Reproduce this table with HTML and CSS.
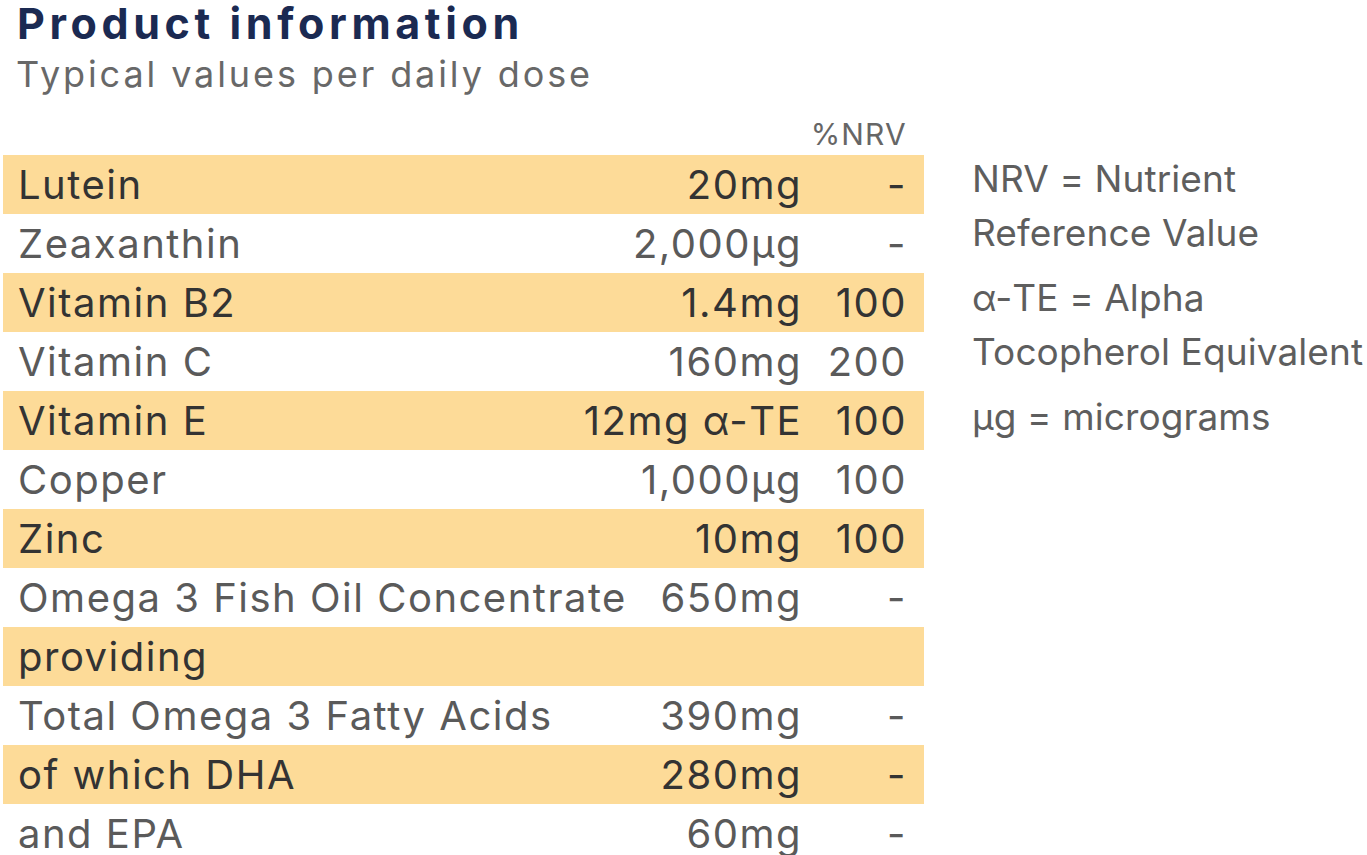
FILE: index.html
```html
<!DOCTYPE html>
<html lang="en">
<head>
<meta charset="utf-8">
<title>Product information</title>
<link rel="stylesheet" href="styles.css">
</head>
<body>
<div class="page">
  <h1 class="title">Product information</h1>
  <p class="subtitle">Typical values per daily dose</p>
  <div class="content">
    <div class="table">
      <div class="head"><span class="h-nrv">%NRV</span></div>
      <div class="row alt"><span class="name">Lutein</span><span class="amt">20mg</span><span class="nrv">-</span></div>
      <div class="row"><span class="name">Zeaxanthin</span><span class="amt">2,000µg</span><span class="nrv">-</span></div>
      <div class="row alt"><span class="name">Vitamin B2</span><span class="amt">1.4mg</span><span class="nrv">100</span></div>
      <div class="row"><span class="name">Vitamin C</span><span class="amt">160mg</span><span class="nrv">200</span></div>
      <div class="row alt"><span class="name">Vitamin E</span><span class="amt">12mg α-TE</span><span class="nrv">100</span></div>
      <div class="row"><span class="name">Copper</span><span class="amt">1,000µg</span><span class="nrv">100</span></div>
      <div class="row alt"><span class="name">Zinc</span><span class="amt">10mg</span><span class="nrv">100</span></div>
      <div class="row"><span class="name">Omega 3 Fish Oil Concentrate</span><span class="amt">650mg</span><span class="nrv">-</span></div>
      <div class="row alt"><span class="name">providing</span><span class="amt"></span><span class="nrv"></span></div>
      <div class="row"><span class="name">Total Omega 3 Fatty Acids</span><span class="amt">390mg</span><span class="nrv">-</span></div>
      <div class="row alt"><span class="name">of which DHA</span><span class="amt">280mg</span><span class="nrv">-</span></div>
      <div class="row"><span class="name">and EPA</span><span class="amt">60mg</span><span class="nrv">-</span></div>
    </div>
    <div class="notes">
      <p>NRV = Nutrient<br>Reference Value</p>
      <p>α-TE = Alpha<br>Tocopherol Equivalent</p>
      <p>µg = micrograms</p>
    </div>
  </div>
</div>
</body>
</html>
```

FILE: styles.css
```css
html, body {
  margin: 0;
  padding: 0;
  background: #ffffff;
}
body {
  font-family: "Inter", "Liberation Sans", sans-serif;
  color: #595959;
}
.title {
  margin: 0;
  padding: 0 0 0 17px;
  font-size: 43px;
  line-height: 46px;
  font-weight: 700;
  color: #1b2a52;
  letter-spacing: 4.6px;
}
.subtitle {
  margin: 4px 0 0 0;
  padding-left: 16px;
  font-size: 36px;
  line-height: 48px;
  font-weight: 400;
  color: #686868;
  letter-spacing: 2.9px;
}
.content {
  display: flex;
  align-items: flex-start;
  gap: 48px;
  margin-top: 14px;
}
.table {
  flex: 0 0 921px;
  margin-left: 3px;
  display: flex;
  flex-direction: column;
}
.head {
  display: flex;
  justify-content: flex-end;
  align-items: center;
  height: 43px;
  padding-right: 17px;
}
.h-nrv {
  font-size: 30px;
  font-weight: 400;
  color: #666666;
  letter-spacing: 1.2px;
}
.row {
  display: grid;
  grid-template-columns: 1fr auto 105px;
  align-items: center;
  height: 59px;
  padding: 0 17px 0 15px;
  font-size: 40px;
  font-weight: 400;
  color: #5a5a5a;
  letter-spacing: 1.5px;
}
.row.alt {
  background: #fddb98;
  color: #333333;
}
.name {
  white-space: nowrap;
}
.amt, .nrv {
  text-align: right;
  white-space: nowrap;
}
.notes {
  padding-top: 40px;
  font-size: 37px;
  line-height: 54px;
  font-weight: 400;
  color: #5e5e5e;
  letter-spacing: 0.1px;
}
.notes p {
  margin: 0 0 11px 0;
  white-space: nowrap;
}
```
